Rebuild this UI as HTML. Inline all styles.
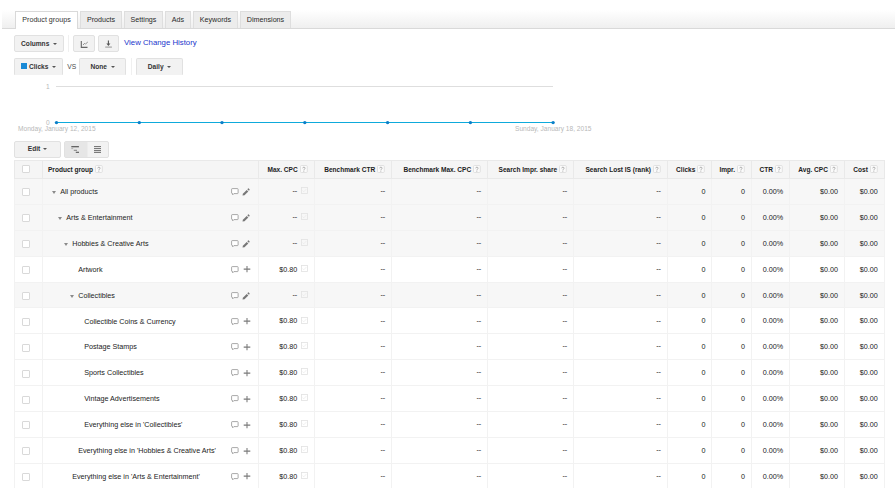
<!DOCTYPE html>
<html><head><meta charset="utf-8">
<style>
*{box-sizing:border-box;margin:0;padding:0}
html,body{width:895px;height:488px;overflow:hidden;background:#fff;font-family:"Liberation Sans",sans-serif;color:#222;position:relative}
.abs{position:absolute}
.tabbar{position:absolute;left:2px;top:10px;width:893px;height:19px;background:linear-gradient(#fff,#efefef);border-bottom:1px solid #d9d9d9}
.tab{position:absolute;top:11px;height:17px;background:#ececec;border:1px solid #dedede;border-bottom:none;font-size:7.15px;color:#2a2a2a;text-align:center;line-height:16px}
.tab.on{background:#fff;border-color:#d9d9d9;height:18px;color:#333}
.btn{position:absolute;background:#f2f2f2;border:1px solid #e1e1e1;border-radius:2px;font-size:6.6px;font-weight:bold;color:#333;line-height:15px;text-align:center}
.btn.nb{border-bottom-color:transparent;border-radius:2px 2px 0 0}
.caret{display:inline-block;width:0;height:0;border-left:2px solid transparent;border-right:2px solid transparent;border-top:2px solid #555;vertical-align:middle;margin-left:3.6px;position:relative;top:0px}
.sep{position:absolute;width:1px;background:#f0f0f0}
.link{position:absolute;font-size:7.8px;color:#2236cc}
.axis{position:absolute;font-size:6.6px;color:#b8b8b8}
table{position:absolute;left:13.5px;top:160px;border-collapse:collapse;table-layout:fixed;font-size:7.2px;color:#222}
td,th{border:1px solid #f2f2f2;height:25.9px;padding:0;white-space:nowrap;overflow:hidden}
th{height:18px;background:#f5f5f5;border-color:#e9e9e9;padding-top:1px;font-weight:bold;font-size:6.55px;color:#222;text-align:right;padding-right:6px}
tr.g td{background:#f7f7f7}
.q{display:inline-block;vertical-align:middle;margin-left:2px;position:relative;top:-1.5px}
td.r{text-align:right;padding-right:6px;padding-bottom:0}
td.pg{position:relative}
.dd{font-style:normal;position:relative;top:-0.8px;color:#111}
.nm{position:absolute;top:0.15px;line-height:25.9px}
.arr{position:absolute;left:-8px;top:11.8px;width:0;height:0;border-left:2.7px solid transparent;border-right:2.7px solid transparent;border-top:3.2px solid #8a8a8a}
.ic1{position:absolute;left:187.6px;top:9.1px}
.ic2{position:absolute;left:199px;top:9px}
.ic3{position:absolute;left:199.9px;top:8.7px}
.chk{display:inline-block;vertical-align:middle;margin-left:3.5px;position:relative;top:-1.4px}
td.cpc{padding-right:6px}
.cb{display:block;margin-left:7.2px;width:8px;height:8px;border:1px solid #d9d9d9;background:#fff;border-radius:1px}
</style></head><body>
<div class="tabbar"></div>
<div class="tab on" style="left:15px;width:63px">Product groups</div>
<div class="tab" style="left:80px;width:42px">Products</div>
<div class="tab" style="left:124px;width:39px">Settings</div>
<div class="tab" style="left:165px;width:26px">Ads</div>
<div class="tab" style="left:193px;width:45px">Keywords</div>
<div class="tab" style="left:240px;width:51px">Dimensions</div>

<div class="btn" style="left:14px;top:35px;width:50px;height:17px">Columns<span class="caret"></span></div>
<div class="sep" style="left:68px;top:35px;height:17px"></div>
<div class="btn" style="left:73px;top:35px;width:22px;height:17px"></div>
<svg class="abs" style="left:78px;top:38px" width="12" height="12" viewBox="0 0 12 12"><path d="M3.3 3V9.4H9.5" fill="none" stroke="#666" stroke-width="1.1"/><path d="M5 7L6.6 5.3L7.4 6.1L9.8 4" fill="none" stroke="#777" stroke-width="0.8"/></svg>
<div class="btn" style="left:98px;top:35px;width:21px;height:17px"></div>
<svg class="abs" style="left:102px;top:38px" width="12" height="12" viewBox="0 0 12 12"><path d="M6.4 2.6V6.6" stroke="#555" stroke-width="1.1"/><path d="M4.4 5.6H8.4L6.4 8Z" fill="#555"/><path d="M3.2 9.1H9.9" stroke="#aaa" stroke-width="1.3"/></svg>
<div class="link" style="left:124px;top:37.5px">View Change History</div>

<div class="btn nb" style="left:14px;top:58px;width:49px;height:17px"><span style="display:inline-block;width:6px;height:6px;background:#1a8ad6;vertical-align:middle;margin-right:2px;position:relative;top:-1px"></span>Clicks<span class="caret"></span></div>
<div class="abs" style="left:67.2px;top:63px;font-size:6.7px;color:#4a4a4a">VS</div>
<div class="btn nb" style="left:79px;top:58px;width:47px;height:17px">None<span class="caret"></span></div>
<div class="sep" style="left:131px;top:58px;height:17px"></div>
<div class="btn nb" style="left:136px;top:58px;width:47px;height:17px">Daily<span class="caret"></span></div>

<div class="axis" style="left:46px;top:82.8px">1</div>
<div class="axis" style="left:46px;top:118.5px">0</div>
<div class="abs" style="left:55.7px;top:86px;width:497.5px;height:1px;background:#dedede"></div>
<svg class="abs" style="left:0;top:0" width="895" height="160">
<line x1="56.5" y1="122.5" x2="553.1" y2="122.5" stroke="#0eaadb" stroke-width="1.2"/>
<g fill="#0a7fc8">
<circle cx="56.5" cy="122.6" r="1.7"/><circle cx="139.3" cy="122.6" r="1.7"/><circle cx="222" cy="122.6" r="1.7"/><circle cx="304.8" cy="122.6" r="1.7"/><circle cx="387.6" cy="122.6" r="1.7"/><circle cx="470.4" cy="122.6" r="1.7"/><circle cx="553.1" cy="122.6" r="1.7"/>
</g></svg>
<div class="axis" style="left:18px;top:124.5px">Monday, January 12, 2015</div>
<div class="axis" style="left:515px;top:124.5px">Sunday, January 18, 2015</div>

<div class="btn" style="left:14px;top:141px;width:47px;height:17px;line-height:14.5px">Edit<span class="caret" style="margin-left:3px"></span></div>
<div class="btn" style="left:64px;top:141px;width:45px;height:17px;background:#f2f2f2"></div>
<div class="abs" style="left:65px;top:142px;width:22px;height:15px;background:#e6e6e6"></div>
<div class="abs" style="left:86.5px;top:142px;width:1px;height:15px;background:#ececec"></div>
<svg class="abs" style="left:64px;top:141px" width="46" height="17" viewBox="0 0 46 17"><path d="M7.3 5.7H14.9" stroke="#555" stroke-width="1.2"/><path d="M7.3 7.6H9.2" stroke="#aaa" stroke-width="0.9"/><path d="M9.8 9.3H13" stroke="#777" stroke-width="0.9"/><path d="M11.8 11.3H15" stroke="#555" stroke-width="1.1"/><path d="M30 5.6H37M30 7.6H37M30 9.6H37M30 11.4H37" stroke="#666" stroke-width="0.95"/></svg>

<table>
<colgroup><col style="width:28.5px"><col style="width:216.3px"><col style="width:55.4px"><col style="width:77.5px"><col style="width:96px"><col style="width:86px"><col style="width:93.8px"><col style="width:44.4px"><col style="width:39.7px"><col style="width:38px"><col style="width:54.9px"><col style="width:39.9px"></colgroup>
<tr><th style="text-align:center;padding:0"><span class="cb" style="position:relative;top:-0.4px"></span></th><th style="text-align:left;padding-left:5px">Product group<svg class="q" width="8" height="8" viewBox="0 0 8 8"><rect x="0.5" y="0.5" width="6.8" height="7" rx="1" fill="#fbfbfb" stroke="#dedede" stroke-width="0.9"/><path d="M2.7 3.3Q2.7 2.2 3.9 2.2Q5.1 2.2 5.1 3.2Q5.1 3.9 4.3 4.3Q3.9 4.5 3.9 5.2V5.5" fill="none" stroke="#9a9a9a" stroke-width="0.75"/><circle cx="3.9" cy="6.5" r="0.45" fill="#9a9a9a"/></svg></th><th>Max. CPC<svg class="q" width="8" height="8" viewBox="0 0 8 8"><rect x="0.5" y="0.5" width="6.8" height="7" rx="1" fill="#fbfbfb" stroke="#dedede" stroke-width="0.9"/><path d="M2.7 3.3Q2.7 2.2 3.9 2.2Q5.1 2.2 5.1 3.2Q5.1 3.9 4.3 4.3Q3.9 4.5 3.9 5.2V5.5" fill="none" stroke="#9a9a9a" stroke-width="0.75"/><circle cx="3.9" cy="6.5" r="0.45" fill="#9a9a9a"/></svg></th><th>Benchmark CTR<svg class="q" width="8" height="8" viewBox="0 0 8 8"><rect x="0.5" y="0.5" width="6.8" height="7" rx="1" fill="#fbfbfb" stroke="#dedede" stroke-width="0.9"/><path d="M2.7 3.3Q2.7 2.2 3.9 2.2Q5.1 2.2 5.1 3.2Q5.1 3.9 4.3 4.3Q3.9 4.5 3.9 5.2V5.5" fill="none" stroke="#9a9a9a" stroke-width="0.75"/><circle cx="3.9" cy="6.5" r="0.45" fill="#9a9a9a"/></svg></th><th>Benchmark Max. CPC<svg class="q" width="8" height="8" viewBox="0 0 8 8"><rect x="0.5" y="0.5" width="6.8" height="7" rx="1" fill="#fbfbfb" stroke="#dedede" stroke-width="0.9"/><path d="M2.7 3.3Q2.7 2.2 3.9 2.2Q5.1 2.2 5.1 3.2Q5.1 3.9 4.3 4.3Q3.9 4.5 3.9 5.2V5.5" fill="none" stroke="#9a9a9a" stroke-width="0.75"/><circle cx="3.9" cy="6.5" r="0.45" fill="#9a9a9a"/></svg></th><th>Search Impr. share<svg class="q" width="8" height="8" viewBox="0 0 8 8"><rect x="0.5" y="0.5" width="6.8" height="7" rx="1" fill="#fbfbfb" stroke="#dedede" stroke-width="0.9"/><path d="M2.7 3.3Q2.7 2.2 3.9 2.2Q5.1 2.2 5.1 3.2Q5.1 3.9 4.3 4.3Q3.9 4.5 3.9 5.2V5.5" fill="none" stroke="#9a9a9a" stroke-width="0.75"/><circle cx="3.9" cy="6.5" r="0.45" fill="#9a9a9a"/></svg></th><th>Search Lost IS (rank)<svg class="q" width="8" height="8" viewBox="0 0 8 8"><rect x="0.5" y="0.5" width="6.8" height="7" rx="1" fill="#fbfbfb" stroke="#dedede" stroke-width="0.9"/><path d="M2.7 3.3Q2.7 2.2 3.9 2.2Q5.1 2.2 5.1 3.2Q5.1 3.9 4.3 4.3Q3.9 4.5 3.9 5.2V5.5" fill="none" stroke="#9a9a9a" stroke-width="0.75"/><circle cx="3.9" cy="6.5" r="0.45" fill="#9a9a9a"/></svg></th><th>Clicks<svg class="q" width="8" height="8" viewBox="0 0 8 8"><rect x="0.5" y="0.5" width="6.8" height="7" rx="1" fill="#fbfbfb" stroke="#dedede" stroke-width="0.9"/><path d="M2.7 3.3Q2.7 2.2 3.9 2.2Q5.1 2.2 5.1 3.2Q5.1 3.9 4.3 4.3Q3.9 4.5 3.9 5.2V5.5" fill="none" stroke="#9a9a9a" stroke-width="0.75"/><circle cx="3.9" cy="6.5" r="0.45" fill="#9a9a9a"/></svg></th><th>Impr.<svg class="q" width="8" height="8" viewBox="0 0 8 8"><rect x="0.5" y="0.5" width="6.8" height="7" rx="1" fill="#fbfbfb" stroke="#dedede" stroke-width="0.9"/><path d="M2.7 3.3Q2.7 2.2 3.9 2.2Q5.1 2.2 5.1 3.2Q5.1 3.9 4.3 4.3Q3.9 4.5 3.9 5.2V5.5" fill="none" stroke="#9a9a9a" stroke-width="0.75"/><circle cx="3.9" cy="6.5" r="0.45" fill="#9a9a9a"/></svg></th><th>CTR<svg class="q" width="8" height="8" viewBox="0 0 8 8"><rect x="0.5" y="0.5" width="6.8" height="7" rx="1" fill="#fbfbfb" stroke="#dedede" stroke-width="0.9"/><path d="M2.7 3.3Q2.7 2.2 3.9 2.2Q5.1 2.2 5.1 3.2Q5.1 3.9 4.3 4.3Q3.9 4.5 3.9 5.2V5.5" fill="none" stroke="#9a9a9a" stroke-width="0.75"/><circle cx="3.9" cy="6.5" r="0.45" fill="#9a9a9a"/></svg></th><th>Avg. CPC<svg class="q" width="8" height="8" viewBox="0 0 8 8"><rect x="0.5" y="0.5" width="6.8" height="7" rx="1" fill="#fbfbfb" stroke="#dedede" stroke-width="0.9"/><path d="M2.7 3.3Q2.7 2.2 3.9 2.2Q5.1 2.2 5.1 3.2Q5.1 3.9 4.3 4.3Q3.9 4.5 3.9 5.2V5.5" fill="none" stroke="#9a9a9a" stroke-width="0.75"/><circle cx="3.9" cy="6.5" r="0.45" fill="#9a9a9a"/></svg></th><th>Cost<svg class="q" width="8" height="8" viewBox="0 0 8 8"><rect x="0.5" y="0.5" width="6.8" height="7" rx="1" fill="#fbfbfb" stroke="#dedede" stroke-width="0.9"/><path d="M2.7 3.3Q2.7 2.2 3.9 2.2Q5.1 2.2 5.1 3.2Q5.1 3.9 4.3 4.3Q3.9 4.5 3.9 5.2V5.5" fill="none" stroke="#9a9a9a" stroke-width="0.75"/><circle cx="3.9" cy="6.5" r="0.45" fill="#9a9a9a"/></svg></th></tr>
<tr class="g"><td><span class="cb" style="position:relative;top:1px"></span></td><td class="pg"><span class="nm" style="left:17.2px"><span class="arr"></span>All products</span><svg class="ic1" width="9" height="9" viewBox="0 0 9 9"><path d="M1.3 0.6H6.4Q7.1 0.6 7.1 1.3V5Q7.1 5.6 6.4 5.6H2.9L1.7 6.8L1.6 5.6Q0.6 5.6 0.6 5V1.3Q0.6 0.6 1.3 0.6Z" fill="#fff" stroke="#929292" stroke-width="0.8"/></svg><svg class="ic2" width="9" height="9" viewBox="0 0 9 9"><path d="M0.5 7.6L0.9 5.7L4.7 1.9L6.3 3.5L2.5 7.3Z" fill="#777"/><path d="M5.3 1.3L6.1 0.5Q6.4 0.2 6.8 0.6L7.6 1.4Q7.9 1.7 7.6 2L6.9 2.8Z" fill="#777"/></svg></td><td class="r cpc"><i class=dd>--</i><svg class="chk" width="7" height="7" viewBox="0 0 7 7"><rect x="0.5" y="0.5" width="6" height="6" fill="none" stroke="#e2e2e2" stroke-width="0.8"/><path d="M1.5 3.6L2.8 4.8L5.4 2" fill="none" stroke="#e6e6e6" stroke-width="0.6"/></svg></td><td class="r"><i class="dd">--</i></td><td class="r"><i class="dd">--</i></td><td class="r"><i class="dd">--</i></td><td class="r"><i class="dd">--</i></td><td class="r">0</td><td class="r">0</td><td class="r">0.00%</td><td class="r">$0.00</td><td class="r">$0.00</td></tr>
<tr class="g"><td><span class="cb" style="position:relative;top:1px"></span></td><td class="pg"><span class="nm" style="left:23.2px"><span class="arr"></span>Arts &amp; Entertainment</span><svg class="ic1" width="9" height="9" viewBox="0 0 9 9"><path d="M1.3 0.6H6.4Q7.1 0.6 7.1 1.3V5Q7.1 5.6 6.4 5.6H2.9L1.7 6.8L1.6 5.6Q0.6 5.6 0.6 5V1.3Q0.6 0.6 1.3 0.6Z" fill="#fff" stroke="#929292" stroke-width="0.8"/></svg><svg class="ic2" width="9" height="9" viewBox="0 0 9 9"><path d="M0.5 7.6L0.9 5.7L4.7 1.9L6.3 3.5L2.5 7.3Z" fill="#777"/><path d="M5.3 1.3L6.1 0.5Q6.4 0.2 6.8 0.6L7.6 1.4Q7.9 1.7 7.6 2L6.9 2.8Z" fill="#777"/></svg></td><td class="r cpc"><i class=dd>--</i><svg class="chk" width="7" height="7" viewBox="0 0 7 7"><rect x="0.5" y="0.5" width="6" height="6" fill="none" stroke="#e2e2e2" stroke-width="0.8"/><path d="M1.5 3.6L2.8 4.8L5.4 2" fill="none" stroke="#e6e6e6" stroke-width="0.6"/></svg></td><td class="r"><i class="dd">--</i></td><td class="r"><i class="dd">--</i></td><td class="r"><i class="dd">--</i></td><td class="r"><i class="dd">--</i></td><td class="r">0</td><td class="r">0</td><td class="r">0.00%</td><td class="r">$0.00</td><td class="r">$0.00</td></tr>
<tr class="g"><td><span class="cb" style="position:relative;top:1px"></span></td><td class="pg"><span class="nm" style="left:29.2px"><span class="arr"></span>Hobbies &amp; Creative Arts</span><svg class="ic1" width="9" height="9" viewBox="0 0 9 9"><path d="M1.3 0.6H6.4Q7.1 0.6 7.1 1.3V5Q7.1 5.6 6.4 5.6H2.9L1.7 6.8L1.6 5.6Q0.6 5.6 0.6 5V1.3Q0.6 0.6 1.3 0.6Z" fill="#fff" stroke="#929292" stroke-width="0.8"/></svg><svg class="ic2" width="9" height="9" viewBox="0 0 9 9"><path d="M0.5 7.6L0.9 5.7L4.7 1.9L6.3 3.5L2.5 7.3Z" fill="#777"/><path d="M5.3 1.3L6.1 0.5Q6.4 0.2 6.8 0.6L7.6 1.4Q7.9 1.7 7.6 2L6.9 2.8Z" fill="#777"/></svg></td><td class="r cpc"><i class=dd>--</i><svg class="chk" width="7" height="7" viewBox="0 0 7 7"><rect x="0.5" y="0.5" width="6" height="6" fill="none" stroke="#e2e2e2" stroke-width="0.8"/><path d="M1.5 3.6L2.8 4.8L5.4 2" fill="none" stroke="#e6e6e6" stroke-width="0.6"/></svg></td><td class="r"><i class="dd">--</i></td><td class="r"><i class="dd">--</i></td><td class="r"><i class="dd">--</i></td><td class="r"><i class="dd">--</i></td><td class="r">0</td><td class="r">0</td><td class="r">0.00%</td><td class="r">$0.00</td><td class="r">$0.00</td></tr>
<tr><td><span class="cb" style="position:relative;top:1px"></span></td><td class="pg"><span class="nm" style="left:35.2px">Artwork</span><svg class="ic1" width="9" height="9" viewBox="0 0 9 9"><path d="M1.3 0.6H6.4Q7.1 0.6 7.1 1.3V5Q7.1 5.6 6.4 5.6H2.9L1.7 6.8L1.6 5.6Q0.6 5.6 0.6 5V1.3Q0.6 0.6 1.3 0.6Z" fill="#fff" stroke="#929292" stroke-width="0.8"/></svg><svg class="ic3" width="9" height="9" viewBox="0 0 9 9"><path d="M4 1V7.2M0.7 4.1H7.3" stroke="#7a7a7a" stroke-width="1.05"/></svg></td><td class="r cpc">$0.80<svg class="chk" width="7" height="7" viewBox="0 0 7 7"><rect x="0.5" y="0.5" width="6" height="6" fill="none" stroke="#e2e2e2" stroke-width="0.8"/><path d="M1.5 3.6L2.8 4.8L5.4 2" fill="none" stroke="#e6e6e6" stroke-width="0.6"/></svg></td><td class="r"><i class="dd">--</i></td><td class="r"><i class="dd">--</i></td><td class="r"><i class="dd">--</i></td><td class="r"><i class="dd">--</i></td><td class="r">0</td><td class="r">0</td><td class="r">0.00%</td><td class="r">$0.00</td><td class="r">$0.00</td></tr>
<tr class="g"><td><span class="cb" style="position:relative;top:1px"></span></td><td class="pg"><span class="nm" style="left:35.2px"><span class="arr"></span>Collectibles</span><svg class="ic1" width="9" height="9" viewBox="0 0 9 9"><path d="M1.3 0.6H6.4Q7.1 0.6 7.1 1.3V5Q7.1 5.6 6.4 5.6H2.9L1.7 6.8L1.6 5.6Q0.6 5.6 0.6 5V1.3Q0.6 0.6 1.3 0.6Z" fill="#fff" stroke="#929292" stroke-width="0.8"/></svg><svg class="ic2" width="9" height="9" viewBox="0 0 9 9"><path d="M0.5 7.6L0.9 5.7L4.7 1.9L6.3 3.5L2.5 7.3Z" fill="#777"/><path d="M5.3 1.3L6.1 0.5Q6.4 0.2 6.8 0.6L7.6 1.4Q7.9 1.7 7.6 2L6.9 2.8Z" fill="#777"/></svg></td><td class="r cpc"><i class=dd>--</i><svg class="chk" width="7" height="7" viewBox="0 0 7 7"><rect x="0.5" y="0.5" width="6" height="6" fill="none" stroke="#e2e2e2" stroke-width="0.8"/><path d="M1.5 3.6L2.8 4.8L5.4 2" fill="none" stroke="#e6e6e6" stroke-width="0.6"/></svg></td><td class="r"><i class="dd">--</i></td><td class="r"><i class="dd">--</i></td><td class="r"><i class="dd">--</i></td><td class="r"><i class="dd">--</i></td><td class="r">0</td><td class="r">0</td><td class="r">0.00%</td><td class="r">$0.00</td><td class="r">$0.00</td></tr>
<tr><td><span class="cb" style="position:relative;top:1px"></span></td><td class="pg"><span class="nm" style="left:41.2px">Collectible Coins &amp; Currency</span><svg class="ic1" width="9" height="9" viewBox="0 0 9 9"><path d="M1.3 0.6H6.4Q7.1 0.6 7.1 1.3V5Q7.1 5.6 6.4 5.6H2.9L1.7 6.8L1.6 5.6Q0.6 5.6 0.6 5V1.3Q0.6 0.6 1.3 0.6Z" fill="#fff" stroke="#929292" stroke-width="0.8"/></svg><svg class="ic3" width="9" height="9" viewBox="0 0 9 9"><path d="M4 1V7.2M0.7 4.1H7.3" stroke="#7a7a7a" stroke-width="1.05"/></svg></td><td class="r cpc">$0.80<svg class="chk" width="7" height="7" viewBox="0 0 7 7"><rect x="0.5" y="0.5" width="6" height="6" fill="none" stroke="#e2e2e2" stroke-width="0.8"/><path d="M1.5 3.6L2.8 4.8L5.4 2" fill="none" stroke="#e6e6e6" stroke-width="0.6"/></svg></td><td class="r"><i class="dd">--</i></td><td class="r"><i class="dd">--</i></td><td class="r"><i class="dd">--</i></td><td class="r"><i class="dd">--</i></td><td class="r">0</td><td class="r">0</td><td class="r">0.00%</td><td class="r">$0.00</td><td class="r">$0.00</td></tr>
<tr><td><span class="cb" style="position:relative;top:1px"></span></td><td class="pg"><span class="nm" style="left:41.2px">Postage Stamps</span><svg class="ic1" width="9" height="9" viewBox="0 0 9 9"><path d="M1.3 0.6H6.4Q7.1 0.6 7.1 1.3V5Q7.1 5.6 6.4 5.6H2.9L1.7 6.8L1.6 5.6Q0.6 5.6 0.6 5V1.3Q0.6 0.6 1.3 0.6Z" fill="#fff" stroke="#929292" stroke-width="0.8"/></svg><svg class="ic3" width="9" height="9" viewBox="0 0 9 9"><path d="M4 1V7.2M0.7 4.1H7.3" stroke="#7a7a7a" stroke-width="1.05"/></svg></td><td class="r cpc">$0.80<svg class="chk" width="7" height="7" viewBox="0 0 7 7"><rect x="0.5" y="0.5" width="6" height="6" fill="none" stroke="#e2e2e2" stroke-width="0.8"/><path d="M1.5 3.6L2.8 4.8L5.4 2" fill="none" stroke="#e6e6e6" stroke-width="0.6"/></svg></td><td class="r"><i class="dd">--</i></td><td class="r"><i class="dd">--</i></td><td class="r"><i class="dd">--</i></td><td class="r"><i class="dd">--</i></td><td class="r">0</td><td class="r">0</td><td class="r">0.00%</td><td class="r">$0.00</td><td class="r">$0.00</td></tr>
<tr><td><span class="cb" style="position:relative;top:1px"></span></td><td class="pg"><span class="nm" style="left:41.2px">Sports Collectibles</span><svg class="ic1" width="9" height="9" viewBox="0 0 9 9"><path d="M1.3 0.6H6.4Q7.1 0.6 7.1 1.3V5Q7.1 5.6 6.4 5.6H2.9L1.7 6.8L1.6 5.6Q0.6 5.6 0.6 5V1.3Q0.6 0.6 1.3 0.6Z" fill="#fff" stroke="#929292" stroke-width="0.8"/></svg><svg class="ic3" width="9" height="9" viewBox="0 0 9 9"><path d="M4 1V7.2M0.7 4.1H7.3" stroke="#7a7a7a" stroke-width="1.05"/></svg></td><td class="r cpc">$0.80<svg class="chk" width="7" height="7" viewBox="0 0 7 7"><rect x="0.5" y="0.5" width="6" height="6" fill="none" stroke="#e2e2e2" stroke-width="0.8"/><path d="M1.5 3.6L2.8 4.8L5.4 2" fill="none" stroke="#e6e6e6" stroke-width="0.6"/></svg></td><td class="r"><i class="dd">--</i></td><td class="r"><i class="dd">--</i></td><td class="r"><i class="dd">--</i></td><td class="r"><i class="dd">--</i></td><td class="r">0</td><td class="r">0</td><td class="r">0.00%</td><td class="r">$0.00</td><td class="r">$0.00</td></tr>
<tr><td><span class="cb" style="position:relative;top:1px"></span></td><td class="pg"><span class="nm" style="left:41.2px">Vintage Advertisements</span><svg class="ic1" width="9" height="9" viewBox="0 0 9 9"><path d="M1.3 0.6H6.4Q7.1 0.6 7.1 1.3V5Q7.1 5.6 6.4 5.6H2.9L1.7 6.8L1.6 5.6Q0.6 5.6 0.6 5V1.3Q0.6 0.6 1.3 0.6Z" fill="#fff" stroke="#929292" stroke-width="0.8"/></svg><svg class="ic3" width="9" height="9" viewBox="0 0 9 9"><path d="M4 1V7.2M0.7 4.1H7.3" stroke="#7a7a7a" stroke-width="1.05"/></svg></td><td class="r cpc">$0.80<svg class="chk" width="7" height="7" viewBox="0 0 7 7"><rect x="0.5" y="0.5" width="6" height="6" fill="none" stroke="#e2e2e2" stroke-width="0.8"/><path d="M1.5 3.6L2.8 4.8L5.4 2" fill="none" stroke="#e6e6e6" stroke-width="0.6"/></svg></td><td class="r"><i class="dd">--</i></td><td class="r"><i class="dd">--</i></td><td class="r"><i class="dd">--</i></td><td class="r"><i class="dd">--</i></td><td class="r">0</td><td class="r">0</td><td class="r">0.00%</td><td class="r">$0.00</td><td class="r">$0.00</td></tr>
<tr><td><span class="cb" style="position:relative;top:1px"></span></td><td class="pg"><span class="nm" style="left:41.2px">Everything else in 'Collectibles'</span><svg class="ic1" width="9" height="9" viewBox="0 0 9 9"><path d="M1.3 0.6H6.4Q7.1 0.6 7.1 1.3V5Q7.1 5.6 6.4 5.6H2.9L1.7 6.8L1.6 5.6Q0.6 5.6 0.6 5V1.3Q0.6 0.6 1.3 0.6Z" fill="#fff" stroke="#929292" stroke-width="0.8"/></svg><svg class="ic3" width="9" height="9" viewBox="0 0 9 9"><path d="M4 1V7.2M0.7 4.1H7.3" stroke="#7a7a7a" stroke-width="1.05"/></svg></td><td class="r cpc">$0.80<svg class="chk" width="7" height="7" viewBox="0 0 7 7"><rect x="0.5" y="0.5" width="6" height="6" fill="none" stroke="#e2e2e2" stroke-width="0.8"/><path d="M1.5 3.6L2.8 4.8L5.4 2" fill="none" stroke="#e6e6e6" stroke-width="0.6"/></svg></td><td class="r"><i class="dd">--</i></td><td class="r"><i class="dd">--</i></td><td class="r"><i class="dd">--</i></td><td class="r"><i class="dd">--</i></td><td class="r">0</td><td class="r">0</td><td class="r">0.00%</td><td class="r">$0.00</td><td class="r">$0.00</td></tr>
<tr><td><span class="cb" style="position:relative;top:1px"></span></td><td class="pg"><span class="nm" style="left:35.2px">Everything else in 'Hobbies &amp; Creative Arts'</span><svg class="ic1" width="9" height="9" viewBox="0 0 9 9"><path d="M1.3 0.6H6.4Q7.1 0.6 7.1 1.3V5Q7.1 5.6 6.4 5.6H2.9L1.7 6.8L1.6 5.6Q0.6 5.6 0.6 5V1.3Q0.6 0.6 1.3 0.6Z" fill="#fff" stroke="#929292" stroke-width="0.8"/></svg><svg class="ic3" width="9" height="9" viewBox="0 0 9 9"><path d="M4 1V7.2M0.7 4.1H7.3" stroke="#7a7a7a" stroke-width="1.05"/></svg></td><td class="r cpc">$0.80<svg class="chk" width="7" height="7" viewBox="0 0 7 7"><rect x="0.5" y="0.5" width="6" height="6" fill="none" stroke="#e2e2e2" stroke-width="0.8"/><path d="M1.5 3.6L2.8 4.8L5.4 2" fill="none" stroke="#e6e6e6" stroke-width="0.6"/></svg></td><td class="r"><i class="dd">--</i></td><td class="r"><i class="dd">--</i></td><td class="r"><i class="dd">--</i></td><td class="r"><i class="dd">--</i></td><td class="r">0</td><td class="r">0</td><td class="r">0.00%</td><td class="r">$0.00</td><td class="r">$0.00</td></tr>
<tr><td><span class="cb" style="position:relative;top:1px"></span></td><td class="pg"><span class="nm" style="left:29.2px">Everything else in 'Arts &amp; Entertainment'</span><svg class="ic1" width="9" height="9" viewBox="0 0 9 9"><path d="M1.3 0.6H6.4Q7.1 0.6 7.1 1.3V5Q7.1 5.6 6.4 5.6H2.9L1.7 6.8L1.6 5.6Q0.6 5.6 0.6 5V1.3Q0.6 0.6 1.3 0.6Z" fill="#fff" stroke="#929292" stroke-width="0.8"/></svg><svg class="ic3" width="9" height="9" viewBox="0 0 9 9"><path d="M4 1V7.2M0.7 4.1H7.3" stroke="#7a7a7a" stroke-width="1.05"/></svg></td><td class="r cpc">$0.80<svg class="chk" width="7" height="7" viewBox="0 0 7 7"><rect x="0.5" y="0.5" width="6" height="6" fill="none" stroke="#e2e2e2" stroke-width="0.8"/><path d="M1.5 3.6L2.8 4.8L5.4 2" fill="none" stroke="#e6e6e6" stroke-width="0.6"/></svg></td><td class="r"><i class="dd">--</i></td><td class="r"><i class="dd">--</i></td><td class="r"><i class="dd">--</i></td><td class="r"><i class="dd">--</i></td><td class="r">0</td><td class="r">0</td><td class="r">0.00%</td><td class="r">$0.00</td><td class="r">$0.00</td></tr>
</table>
</body></html>
